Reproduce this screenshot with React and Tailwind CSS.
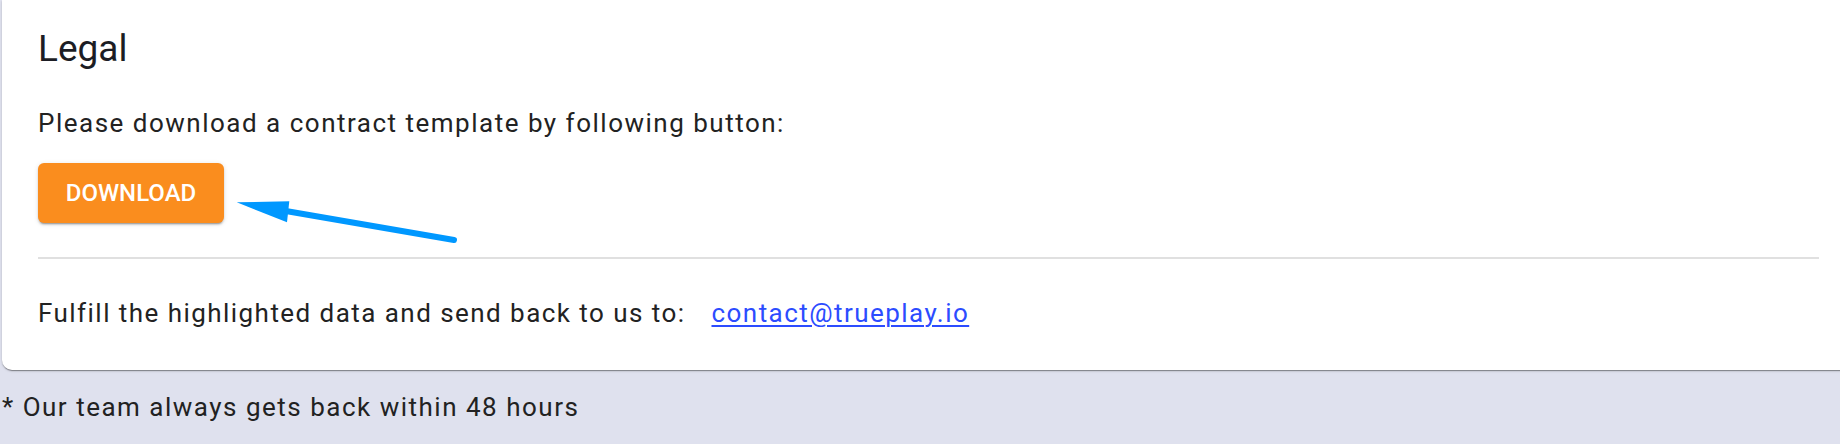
import React from 'react';

const ContactArrow = () => (
  <svg
    className="absolute left-0 top-0 pointer-events-none"
    width="500"
    height="260"
    viewBox="0 0 500 260"
  >
    <line x1="454" y1="240" x2="280" y2="210" stroke="#0098ff" strokeWidth="6" strokeLinecap="round" />
    <polygon points="236.7,202.3 289.3,201.2 287,222.2" fill="#0098ff" />
  </svg>
);

const App = () => {
  return (
    <div
      className="relative w-[1840px] h-[444px] overflow-hidden bg-[#dfe1ee] text-[#222222]"
      style={{ fontFamily: 'Roboto, "Liberation Sans", sans-serif' }}
    >
      <div className="ml-[2px] w-[1853px] bg-white rounded-b-[10px] pl-[36px] pr-[36px] pt-[27px] pb-[39px] shadow-[0_2px_1px_-1px_rgba(0,0,0,0.25),0_1px_1px_0_rgba(0,0,0,0.16),0_1px_3px_0_rgba(0,0,0,0.14)]">
        <h2 className="text-[37px] leading-[44px] font-normal text-[#1c1d24]">Legal</h2>

        <p className="mt-[34px] text-[26px] leading-[36px] tracking-[1.5px]">
          Please download a contract template by following button:
        </p>

        <button className="mt-[22px] w-[186px] h-[60px] flex items-center justify-center rounded-[6px] bg-[#fa8d1e] text-white text-[24px] font-medium uppercase shadow-[0_3px_1px_-2px_rgba(0,0,0,0.2),0_2px_2px_0_rgba(0,0,0,0.14),0_1px_5px_0_rgba(0,0,0,0.12)]">
          Download
        </button>

        <div className="mt-[34px] h-[2px] bg-[#e0e0e0]" />

        <div className="mt-[36px] flex items-center text-[26px] leading-[36px] tracking-[1.45px]">
          <span>Fulfill the highlighted data and send back to us to:</span>
          <a href="#" className="ml-[26px] text-[#2c4cff] underline underline-offset-[3px] decoration-[2px]">
            contact@trueplay.io
          </a>
        </div>
      </div>

      <p className="mt-[19px] pl-[2px] text-[26px] leading-[36px] tracking-[1.5px]">
        * Our team always gets back within 48 hours
      </p>

      <ContactArrow />
    </div>
  );
};

export default App;
